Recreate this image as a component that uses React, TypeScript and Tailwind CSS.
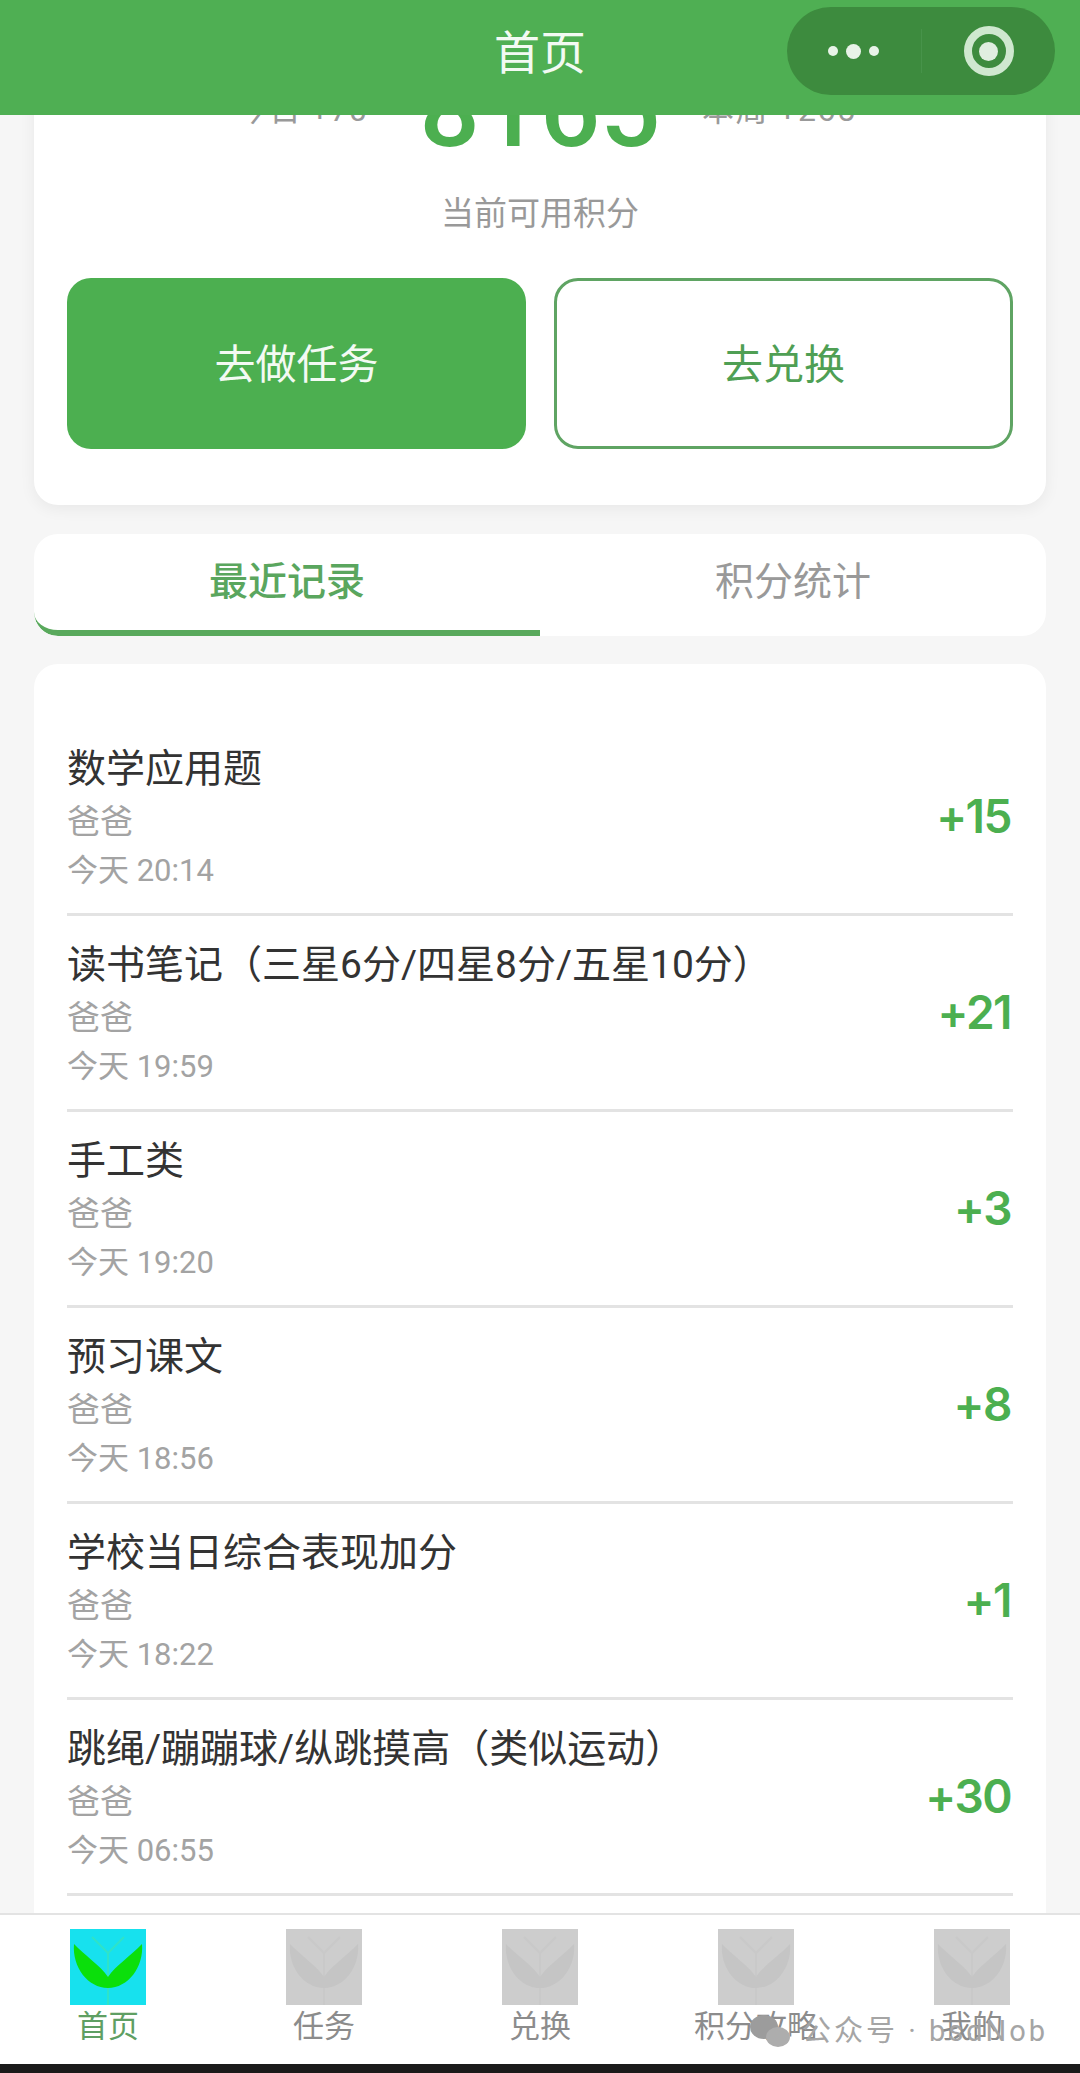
import React from "react";

const records = [
  { title: "数学应用题", time: "今天 20:14", points: "+15" },
  { title: "读书笔记（三星6分/四星8分/五星10分）", time: "今天 19:59", points: "+21" },
  { title: "手工类", time: "今天 19:20", points: "+3" },
  { title: "预习课文", time: "今天 18:56", points: "+8" },
  { title: "学校当日综合表现加分", time: "今天 18:22", points: "+1" },
  { title: "跳绳/蹦蹦球/纵跳摸高（类似运动）", time: "今天 06:55", points: "+30" },
];

const tabs = ["首页", "任务", "兑换", "积分攻略", "我的"];

function LeafIcon({ active }: { active: boolean }) {
  const bg = active ? "#17e1ee" : "#cdcdcd";
  const leaf = active ? "#0bdf0b" : "#c5c5c5";
  const stem = active ? "#2fe3c8" : "#c9c9c9";
  return (
    <svg width="76" height="76" viewBox="0 0 76 76">
      <rect width="76" height="76" fill={bg} />
      <path d="M38 50V76M38 24L22 8M38 24L54 8M38 24V50" stroke={stem} strokeWidth="2" fill="none" />
      <path d="M4 15C14 26 30 36 38 48C46 36 62 26 72 15C74 38 58 59 38 59C18 59 2 38 4 15Z" fill={leaf} />
    </svg>
  );
}

function RecordRow({ title, time, points }: { title: string; time: string; points: string }) {
  return (
    <div className="h-[196px] border-b-[3px] border-[#e3e3e3] flex items-center justify-between">
      <div className="flex flex-col">
        <div className="text-[39px] leading-[52px] text-[#333]">{title}</div>
        <div className="text-[33px] leading-[42px] mt-[6px] text-[#a3a3a3]">爸爸</div>
        <div className="text-[31px] leading-[40px] mt-[8px] text-[#a3a3a3]">{time}</div>
      </div>
      <div className="font-['Inter'] text-[46px] font-semibold tracking-[-1.5px] pr-[2px] text-[#4caf50]">{points}</div>
    </div>
  );
}

export default function App() {
  return (
    <div className="h-[2073px] flex flex-col overflow-hidden bg-[#f6f6f6] font-['Roboto','Noto_Sans_CJK_SC',sans-serif]">
      <header className="relative z-10 h-[115px] shrink-0 bg-[#4faf53] flex items-center justify-center pb-[8px]">
        <span className="text-[46px] text-[#f3faf3]">首页</span>
        <div className="absolute left-[787px] top-[7px] w-[268px] h-[88px] rounded-full bg-[#3d8b3e] flex items-center">
          <div className="w-[134px] flex items-center justify-center gap-[8px] pr-[2px]">
            <span className="w-[10px] h-[10px] rounded-full bg-[#e8f3e8]" />
            <span className="w-[15px] h-[15px] rounded-full bg-[#e8f3e8]" />
            <span className="w-[10px] h-[10px] rounded-full bg-[#e8f3e8]" />
          </div>
          <div className="w-px h-[44px] bg-[#47934a]" />
          <div className="flex-1 flex items-center justify-center">
            <div className="w-[50px] h-[50px] rounded-full border-[8px] border-[#cfe8cf] flex items-center justify-center">
              <span className="w-[19px] h-[19px] rounded-full bg-[#e0eee0]" />
            </div>
          </div>
        </div>
      </header>

      <main className="flex-1 overflow-hidden min-h-0 px-[34px]">
        <section className="-mt-[87px] bg-white rounded-[24px] shadow-[0_4px_16px_rgba(0,0,0,0.06)] px-[33px] pb-[56px]">
          <div className="h-[135px] flex items-end justify-center">
            <span className="w-[215px] text-[32px] leading-[36px] tracking-[1px] text-[#999] text-right mb-[35px] pr-[24px] whitespace-nowrap">今日 +70</span>
            <span className="w-[296px] text-center text-[106px] leading-[135px] font-medium text-[#4caf50] -mb-[15px]">8165</span>
            <span className="w-[215px] text-[32px] leading-[36px] tracking-[1.5px] text-[#999] mb-[35px] pl-[14px] whitespace-nowrap">本周 +265</span>
          </div>
          <div className="mt-[30px] text-center text-[33px] leading-[42px] text-[#999]">当前可用积分</div>
          <div className="mt-[43px] grid grid-cols-2 gap-[28px]">
            <button className="h-[171px] rounded-[24px] bg-[#4caf50] text-[#f3faf3] text-[41px] pt-[4px]">去做任务</button>
            <button className="h-[171px] rounded-[24px] border-[3px] border-[#5fa463] bg-white text-[#4f9f54] text-[41px] pt-[4px]">去兑换</button>
          </div>
        </section>

        <section className="mt-[29px] h-[102px] bg-white rounded-[24px] overflow-hidden flex">
          <div className="flex-1 flex items-center justify-center border-b-[6px] border-[#59a95c] rounded-bl-[24px]">
            <span className="text-[39px] font-medium text-[#5aa65e]">最近记录</span>
          </div>
          <div className="flex-1 flex items-center justify-center pb-[6px]">
            <span className="text-[39px] text-[#999]">积分统计</span>
          </div>
        </section>

        <section className="mt-[28px] bg-white rounded-t-[24px] px-[33px] pt-[56px] pb-[40px]">
          {records.map((r) => (
            <RecordRow key={r.time} {...r} />
          ))}
        </section>
      </main>

      <nav className="relative h-[151px] shrink-0 bg-white border-t-2 border-[#e3e3e3] flex pt-[14px]">
        {tabs.map((t, i) => (
          <div key={t} className="flex-1 flex flex-col items-center">
            <LeafIcon active={i === 0} />
            <span className={`text-[31px] leading-[44px] whitespace-nowrap ${i === 0 ? "text-[#5f9f63]" : "text-[#8c8c8c]"}`}>{t}</span>
          </div>
        ))}
        <div className="absolute left-[750px] top-[98px] flex items-center gap-[12px] text-[#a5a5a5]">
          <svg width="40" height="34" viewBox="0 0 40 34">
            <ellipse cx="14" cy="13" rx="14" ry="12" fill="#9c9c9c" />
            <ellipse cx="28" cy="23" rx="12" ry="10" fill="#adadad" />
          </svg>
          <span className="text-[29px] leading-[36px] tracking-[3px] whitespace-nowrap">公众号 · bsdNob</span>
        </div>
      </nav>
      <div className="h-[9px] shrink-0 bg-[#1a1a1a]" />
    </div>
  );
}
